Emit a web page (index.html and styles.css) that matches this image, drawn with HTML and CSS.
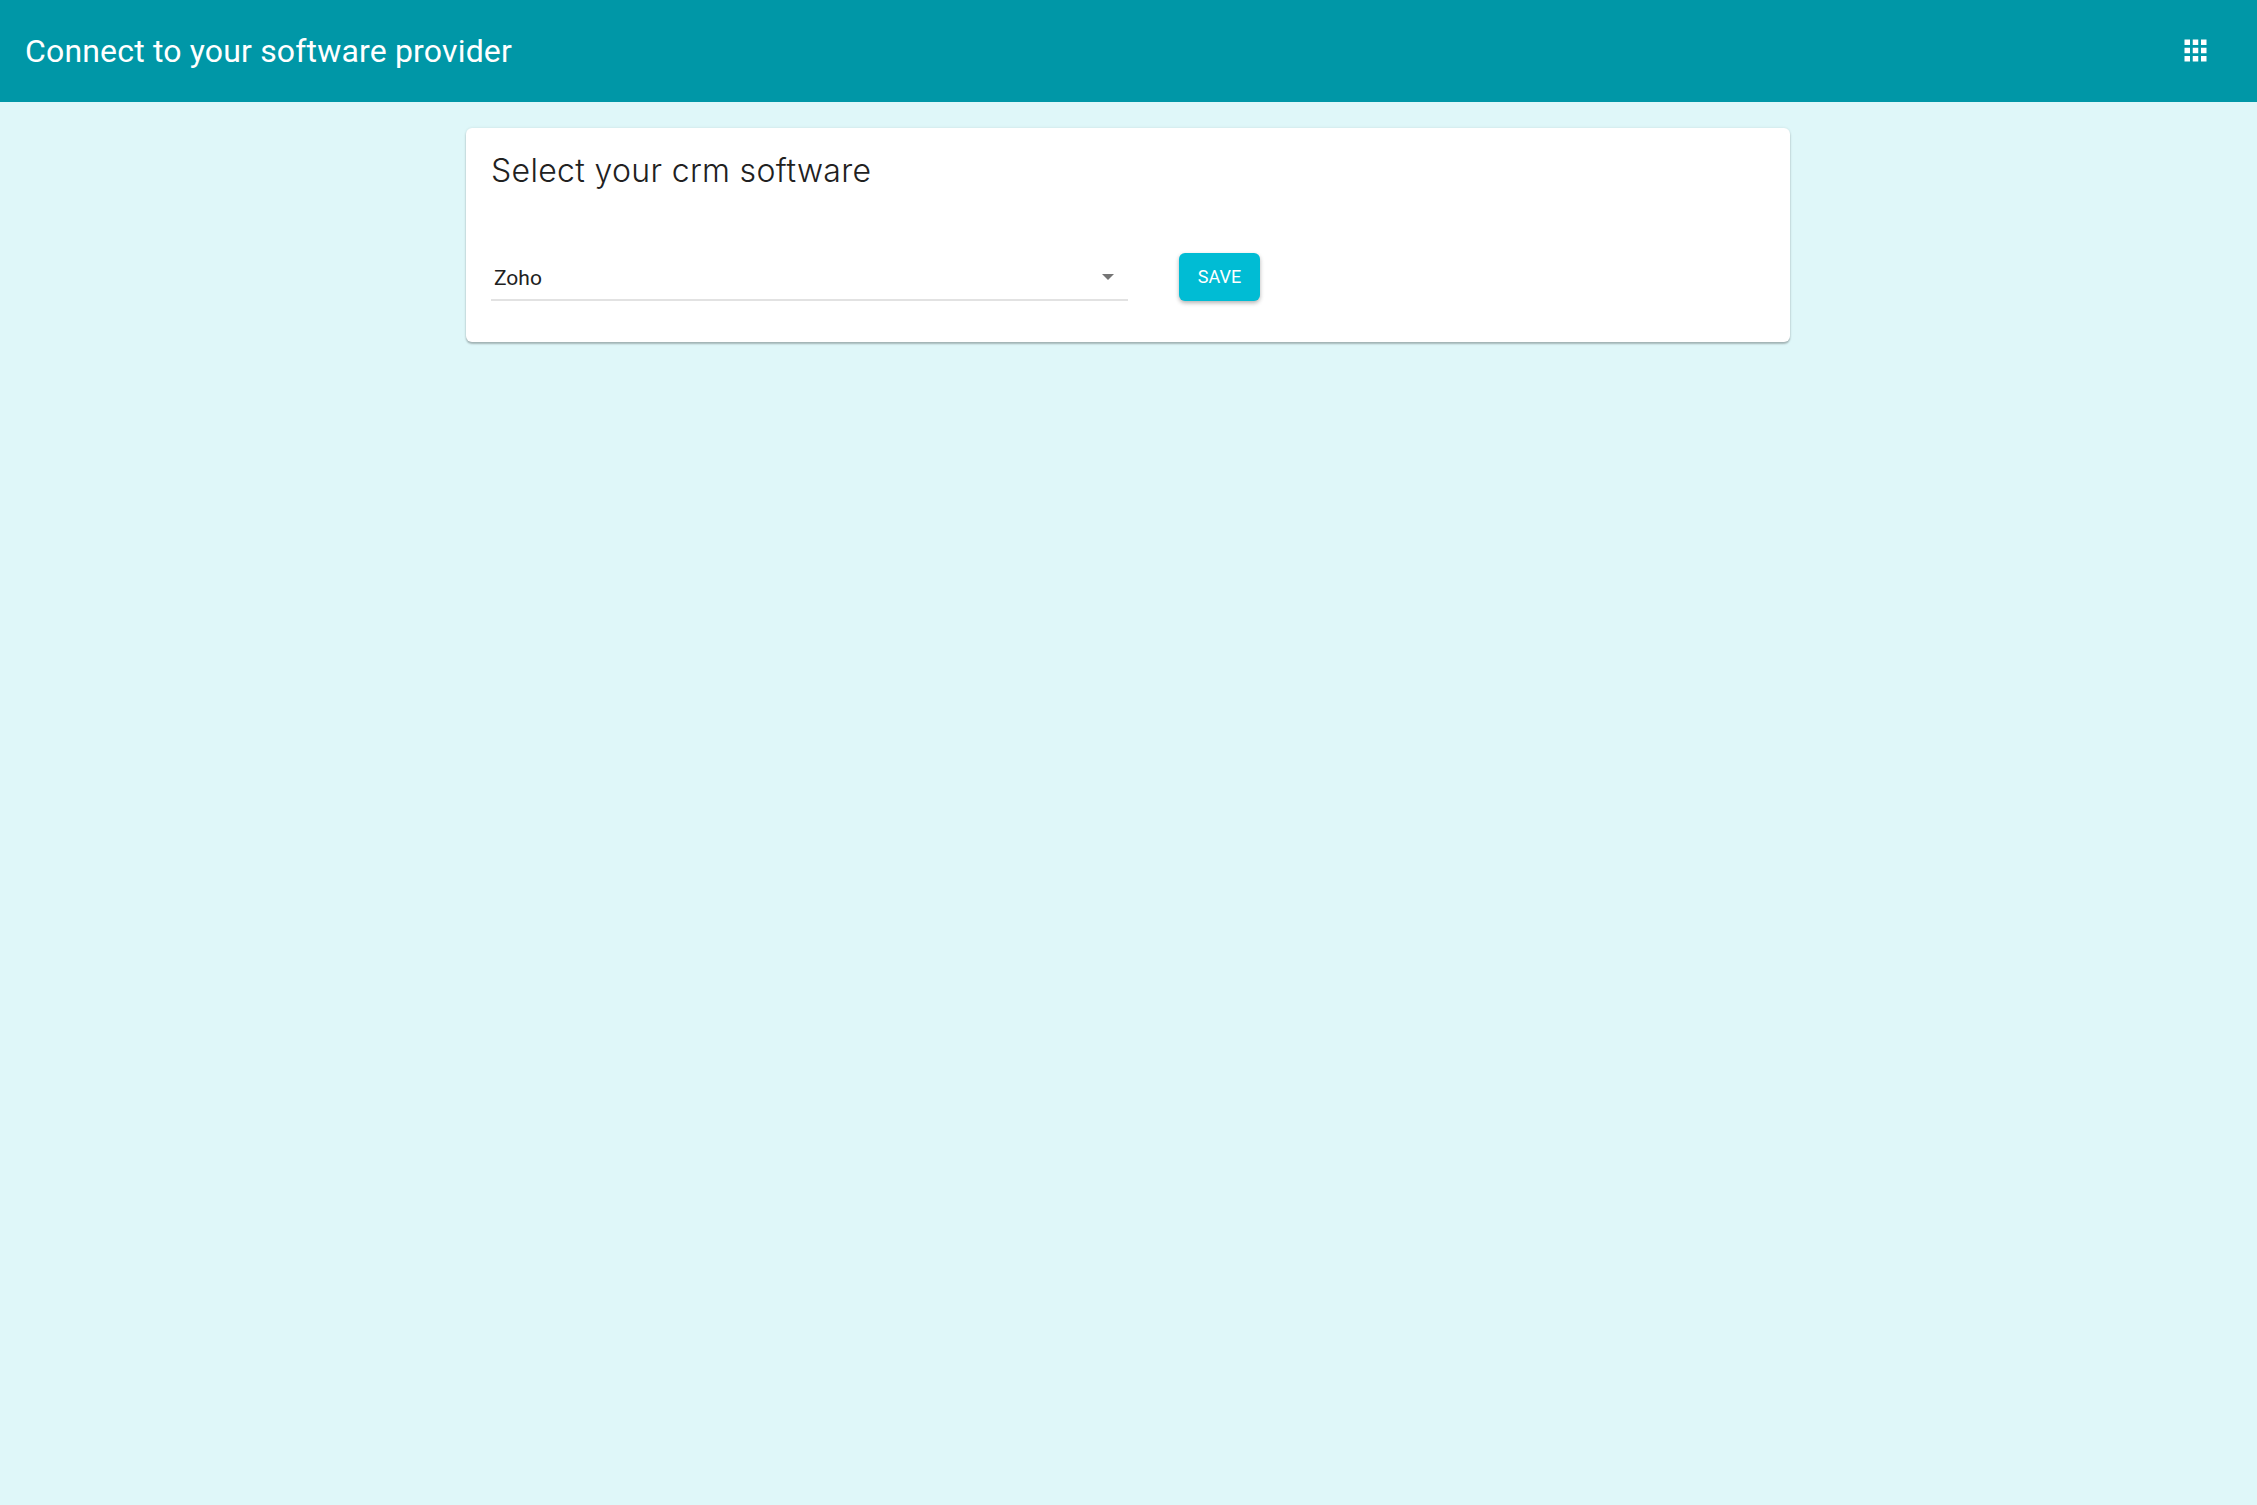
FILE: index.html
```html
<!DOCTYPE html>
<html lang="en">
<head>
    <meta charset="UTF-8">
    <title>Connect to your software provider</title>
    <link rel="stylesheet" href="styles.css">
</head>
<body>
    <header class="topbar">
        <h1 class="topbar-title">Connect to your software provider</h1>
        <svg class="apps-icon" viewBox="0 0 24 24" aria-label="Apps">
            <path d="M4 8h4V4H4v4zm6 12h4v-4h-4v4zm-6 0h4v-4H4v4zm0-6h4v-4H4v4zm6 0h4v-4h-4v4zm6-10v4h4V4h-4zm-6 4h4V4h-4v4zm6 6h4v-4h-4v4zm0 6h4v-4h-4v4z"/>
        </svg>
    </header>

    <main class="content">
        <section class="card">
            <h2 class="card-title">Select your crm software</h2>
            <div class="form-row">
                <div class="select-field">
                    <span class="select-value">Zoho</span>
                    <span class="select-caret"></span>
                </div>
                <button class="save-btn">SAVE</button>
            </div>
        </section>
    </main>
</body>
</html>
```

FILE: styles.css
```css
html, body {
    height: 100%;
}

body {
    margin: 0;
    background-color: #dff7f9;
    font-family: Roboto, "Liberation Sans", sans-serif;
    display: flex;
    flex-direction: column;
}

.topbar {
    height: 102px;
    flex-shrink: 0;
    background-color: #0097a7;
    color: white;
    display: flex;
    align-items: center;
    justify-content: space-between;
    padding: 0 45px 0 25px;
}

.topbar-title {
    margin: 0;
    font-size: 32px;
    font-weight: 400;
    letter-spacing: 0.17px;
}

.apps-icon {
    width: 33px;
    height: 33px;
    margin-bottom: 2px;
    fill: white;
}

.content {
    display: flex;
    justify-content: center;
    padding: 26px 1px 0 0;
}

.card {
    width: 1324px;
    height: 214px;
    box-sizing: border-box;
    padding: 22px 25px 0;
    background-color: white;
    border-radius: 6px;
    box-shadow: 0 2px 2px rgba(0, 0, 0, 0.25), 0 0 3px rgba(0, 0, 0, 0.1);
}

.card-title {
    margin: 0;
    font-family: Inter, sans-serif;
    font-size: 32px;
    line-height: 42px;
    font-weight: 300;
    letter-spacing: 0.33px;
    color: #212121;
}

.form-row {
    display: flex;
    align-items: flex-end;
    gap: 51px;
    margin-top: 61px;
}

.select-field {
    width: 637px;
    height: 47px;
    box-sizing: border-box;
    border-bottom: 2px solid #e2e2e2;
    display: flex;
    align-items: center;
    justify-content: space-between;
    padding: 2px 14px 0 3px;
}

.select-value {
    font-size: 21px;
    color: #212121;
}

.select-caret {
    width: 0;
    height: 0;
    margin-bottom: 2px;
    border-left: 6px solid transparent;
    border-right: 6px solid transparent;
    border-top: 6px solid #757575;
}

.save-btn {
    width: 81px;
    height: 48px;
    padding: 0 0 2px;
    border: none;
    border-radius: 6px;
    background-color: #00bcd4;
    color: white;
    font-family: Roboto, sans-serif;
    font-size: 18px;
    box-shadow: 0 2px 4px rgba(0, 0, 0, 0.3);
}
```
